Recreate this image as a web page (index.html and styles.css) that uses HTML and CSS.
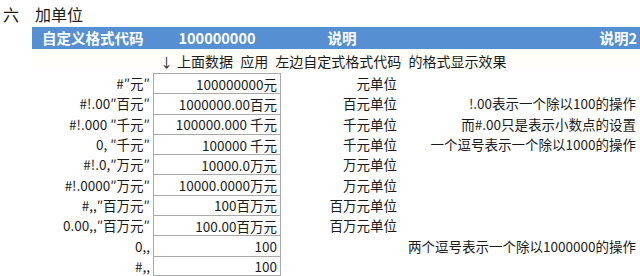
FILE: index.html
```html
<!DOCTYPE html>
<html lang="zh">
<head>
<meta charset="utf-8">
<link rel="stylesheet" href="styles.css">
</head>
<body>
<div class="title"><span class="num">六</span><span class="name">加单位</span></div>
<div class="bar">
  <div class="h1">自定义格式代码</div>
  <div class="h2">100000000</div>
  <div class="h3">说明</div>
  <div class="h4">说明2</div>
</div>
<div class="note-row"><span class="arrow">↓</span><span>上面数据 应用 左边自定式格式代码 的格式显示效果</span></div>
<div class="table">
  <div class="code">#″元″</div><div class="val">100000000元</div><div class="desc">元单位</div><div class="rem"></div>
  <div class="code">#!.00″百元″</div><div class="val">1000000.00百元</div><div class="desc">百元单位</div><div class="rem">!.00表示一个除以100的操作</div>
  <div class="code">#!.000 ″千元″</div><div class="val">100000.000 千元</div><div class="desc">千元单位</div><div class="rem">而#.00只是表示小数点的设置</div>
  <div class="code">0, ″千元″</div><div class="val">100000 千元</div><div class="desc">千元单位</div><div class="rem">一个逗号表示一个除以1000的操作</div>
  <div class="code">#!.0,″万元″</div><div class="val">10000.0万元</div><div class="desc">万元单位</div><div class="rem"></div>
  <div class="code">#!.0000″万元″</div><div class="val">10000.0000万元</div><div class="desc">万元单位</div><div class="rem"></div>
  <div class="code">#,,″百万元″</div><div class="val">100百万元</div><div class="desc">百万元单位</div><div class="rem"></div>
  <div class="code">0.00,,″百万元″</div><div class="val">100.00百万元</div><div class="desc">百万元单位</div><div class="rem"></div>
  <div class="code">0,,</div><div class="val">100</div><div class="desc"></div><div class="rem">两个逗号表示一个除以1000000的操作</div>
  <div class="code">#,,</div><div class="val last">100</div><div class="desc"></div><div class="rem"></div>
</div>
</body>
</html>
```

FILE: styles.css
```css
html, body {
  margin: 0;
  padding: 0;
  background: #ffffff;
}
body {
  width: 640px;
  height: 276px;
  overflow: hidden;
  font-family: "Noto Sans CJK SC", "Noto Sans", sans-serif;
  color: #1a1a1a;
  font-size: 13.5px;
}
.title {
  height: 27px;
  display: flex;
  align-items: center;
  font-size: 16px;
  line-height: 1;
}
.title .num {
  width: 35px;
  padding-left: 3px;
  box-sizing: border-box;
}
.bar {
  margin-left: 32px;
  height: 22px;
  background: #5690d2;
  color: #ffffff;
  font-weight: bold;
  font-size: 14.5px;
  display: grid;
  grid-template-columns: 121px 128px 116px 1fr;
  align-items: center;
  line-height: 22px;
}
.h1 { padding-left: 10px; }
.h2 { text-align: center; }
.h3 { text-align: center; padding-left: 6px; }
.h4 { text-align: right; padding-right: 3px; }
.note-row {
  height: 24px;
  margin-left: 32px;
  padding-left: 128px;
  display: flex;
  align-items: center;
  font-size: 14px;
  word-spacing: 4px;
  background: linear-gradient(#fffdf3, #ffffff);
}
.note-row .arrow {
  width: 17px;
  font-size: 13px;
}
.table {
  margin-left: 32px;
  display: grid;
  grid-template-columns: 121px 128px 116px 1fr;
  grid-auto-rows: 20.3px;
  align-items: stretch;
}
.table > div {
  display: flex;
  align-items: center;
  justify-content: flex-end;
  white-space: nowrap;
}
.code { padding-right: 3px; }
.val {
  border: 1px solid #a9a9a9;
  border-bottom: none;
  padding-right: 3px;
}
.val.last { border-bottom: 1px solid #a9a9a9; }
.rem { padding-right: 4px; }
```
